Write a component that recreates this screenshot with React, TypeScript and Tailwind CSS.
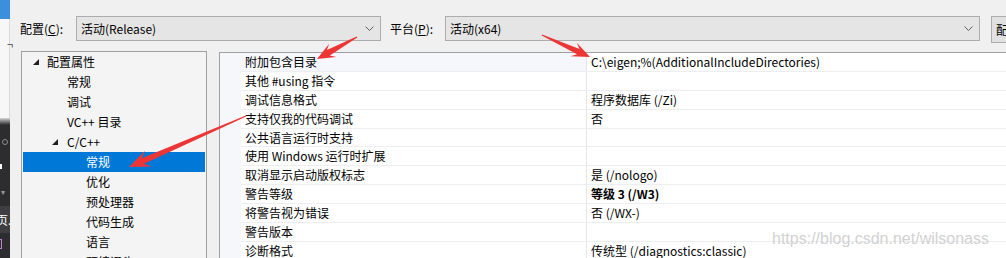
import React from "react";

type Row = { name: string; value: string; bold?: boolean };

const rows: Row[] = [
  { name: "附加包含目录", value: "C:\\eigen;%(AdditionalIncludeDirectories)" },
  { name: "其他 #using 指令", value: "" },
  { name: "调试信息格式", value: "程序数据库 (/Zi)" },
  { name: "支持仅我的代码调试", value: "否" },
  { name: "公共语言运行时支持", value: "" },
  { name: "使用 Windows 运行时扩展", value: "" },
  { name: "取消显示启动版权标志", value: "是 (/nologo)" },
  { name: "警告等级", value: "等级 3 (/W3)", bold: true },
  { name: "将警告视为错误", value: "否 (/WX-)" },
  { name: "警告版本", value: "" },
  { name: "诊断格式", value: "传统型 (/diagnostics:classic)" },
];

type TreeItem = { label: string; level: 0 | 1 | 2; open?: boolean; selected?: boolean };

const tree: TreeItem[] = [
  { label: "配置属性", level: 0, open: true },
  { label: "常规", level: 1 },
  { label: "调试", level: 1 },
  { label: "VC++ 目录", level: 1 },
  { label: "C/C++", level: 1, open: true },
  { label: "常规", level: 2, selected: true },
  { label: "优化", level: 2 },
  { label: "预处理器", level: 2 },
  { label: "代码生成", level: 2 },
  { label: "语言", level: 2 },
  { label: "预编译头", level: 2 },
];

function Chevron() {
  return (
    <svg width="9" height="5" viewBox="0 0 9 5" className="shrink-0">
      <polyline points="0.5,0.5 4.5,4.5 8.5,0.5" fill="none" stroke="#606060" strokeWidth="1" />
    </svg>
  );
}

function Expander() {
  return (
    <svg width="6" height="6" viewBox="0 0 6 6" className="shrink-0">
      <polygon points="6,0 6,6 0,6" fill="#1e1e1e" />
    </svg>
  );
}

// tapered "screenshot tool" arrow, from tail to tip
function arrowPoints(x1: number, y1: number, x2: number, y2: number, headL: number, headW: number, shaftW: number) {
  const dx = x2 - x1;
  const dy = y2 - y1;
  const len = Math.hypot(dx, dy);
  const ux = dx / len;
  const uy = dy / len;
  const nx = -uy;
  const ny = ux;
  const neck = { x: x2 - ux * headL * 0.72, y: y2 - uy * headL * 0.72 };
  const back = { x: x2 - ux * headL, y: y2 - uy * headL };
  const pts = [
    [x1 + nx * 0.6, y1 + ny * 0.6],
    [neck.x + (nx * shaftW) / 2, neck.y + (ny * shaftW) / 2],
    [back.x + (nx * headW) / 2, back.y + (ny * headW) / 2],
    [x2, y2],
    [back.x - (nx * headW) / 2, back.y - (ny * headW) / 2],
    [neck.x - (nx * shaftW) / 2, neck.y - (ny * shaftW) / 2],
    [x1 - nx * 0.6, y1 - ny * 0.6],
  ];
  return pts.map((p) => `${p[0].toFixed(1)},${p[1].toFixed(1)}`).join(" ");
}

export default function App() {
  return (
    <div className="relative flex w-[1006px] h-[258px] overflow-hidden bg-[#f0f0f0] text-[12px] text-black font-['Noto_Sans_CJK_SC','Noto_Sans',sans-serif] leading-none">
      {/* window behind the dialog */}
      <div className="flex flex-col w-[10px] shrink-0">
        <div className="h-[19px] bg-[#3b8fdc]" />
        <div className="relative h-[99px] bg-[#f7f7f7] border-r border-[#d9d9d9]">
          <span className="absolute left-[7px] top-[20px] text-[11px] text-[#444]">¬</span>
        </div>
        <div className="h-[7px] bg-gradient-to-b from-[#d8d8d8] to-[#2d2d30]" />
        <div className="relative flex-1 bg-[#2d2d30]">
          <div className="absolute left-[2px] top-[14px] w-[6px] h-[6px] rounded-full border border-[#8a8a8a]" />
          <div className="absolute left-0 top-[39px] w-[2px] h-[5px] bg-white" />
          <div className="absolute left-[1px] top-[63px] text-[8px] text-[#999]">▾</div>
          <div className="absolute left-0 top-[81px] w-[10px] h-[27px] bg-[#3e3e42] text-white text-[12px] leading-[27px] overflow-hidden whitespace-nowrap">
            <span className="ml-[-4px]">页.c</span>
          </div>
          <div className="absolute left-[-2px] top-[114px] w-[4px] h-[10px] border border-[#c080d0]" />
        </div>
      </div>

      {/* dialog */}
      <div className="flex flex-col flex-1 min-w-0">
        <div className="flex items-start h-[51px] pl-[10px] pt-[16px] shrink-0">
          <div className="w-[56px] h-[25px] shrink-0 flex items-center">
            配置(<span className="underline">C</span>):
          </div>
          <div className="w-[305px] h-[25px] shrink-0 flex items-center justify-between pl-[4px] pr-[6px] bg-[#e5e5e5] border border-[#adadad]">
            <span>活动(Release)</span>
            <Chevron />
          </div>
          <div className="ml-[9px] w-[55px] h-[25px] shrink-0 flex items-center">
            平台(<span className="underline">P</span>):
          </div>
          <div className="w-[535px] h-[25px] shrink-0 flex items-center justify-between pl-[4px] pr-[6px] bg-[#e5e5e5] border border-[#adadad]">
            <span>活动(x64)</span>
            <Chevron />
          </div>
          <div className="ml-[11px] w-[60px] h-[27px] shrink-0 flex items-center pl-[4px] bg-[#e1e1e1] border border-[#adadad] overflow-hidden whitespace-nowrap">
            配置管理器
          </div>
        </div>

        <div className="flex flex-1 min-h-0">
          {/* tree */}
          <div className="ml-[11px] w-[186px] shrink-0 bg-[#f4f4f4] border-l border-t border-r border-[#a0a0a0] overflow-hidden">
            {tree.map((item, i) => (
              <div
                key={i}
                className={`flex items-center h-[20px] mx-px ${item.selected ? "bg-[#0078d7] text-white" : ""}`}
              >
                {item.level === 0 && (
                  <>
                    <span className="ml-[10px] w-[14px]"><Expander /></span>
                    <span>{item.label}</span>
                  </>
                )}
                {item.level === 1 && (
                  <>
                    <span className="ml-[29px] w-[15px]">{item.open && <Expander />}</span>
                    <span>{item.label}</span>
                  </>
                )}
                {item.level === 2 && <span className="ml-[63px]">{item.label}</span>}
              </div>
            ))}
          </div>

          {/* property grid */}
          <div className="ml-[12px] mt-px flex flex-1 min-w-0 bg-white border-l border-t border-[#a0a0a0] overflow-hidden">
            <div className="w-[21px] shrink-0 bg-[#f5f7fb]" />
            <div className="flex-1 flex flex-col">
              {rows.map((r, i) => (
                <div key={i} className="flex h-[18.9px] shrink-0 border-b border-[#eceef2]">
                  <div
                    className={`w-[346px] shrink-0 flex items-center pl-[4px] border-r border-[#e6e6e6] whitespace-nowrap ${i === 0 ? "bg-[#f5f7fd]" : ""}`}
                  >
                    {r.name}
                  </div>
                  <div className={`flex-1 flex items-center pl-[4px] whitespace-nowrap ${r.bold ? "font-bold" : ""}`}>
                    {r.value}
                  </div>
                </div>
              ))}
            </div>
          </div>
        </div>
      </div>

      {/* watermark */}
      <div className="absolute left-[772px] top-[230px] text-[16px] leading-[18px] text-[#d2d2d2] font-['Liberation_Sans',sans-serif] whitespace-nowrap pointer-events-none">
        https://blog.csdn.net/wilsonass
      </div>

      {/* annotation arrows */}
      <svg className="absolute inset-0 pointer-events-none" width="1006" height="258" viewBox="0 0 1006 258">
        <polygon points={arrowPoints(357, 37, 317, 59, 18, 15, 6)} fill="#ee3535" />
        <polygon points={arrowPoints(542, 35, 590, 57, 18, 15, 6)} fill="#ee3535" />
        <polygon points={arrowPoints(246, 116, 129, 167, 21, 17, 6)} fill="#ee3535" />
      </svg>
    </div>
  );
}
